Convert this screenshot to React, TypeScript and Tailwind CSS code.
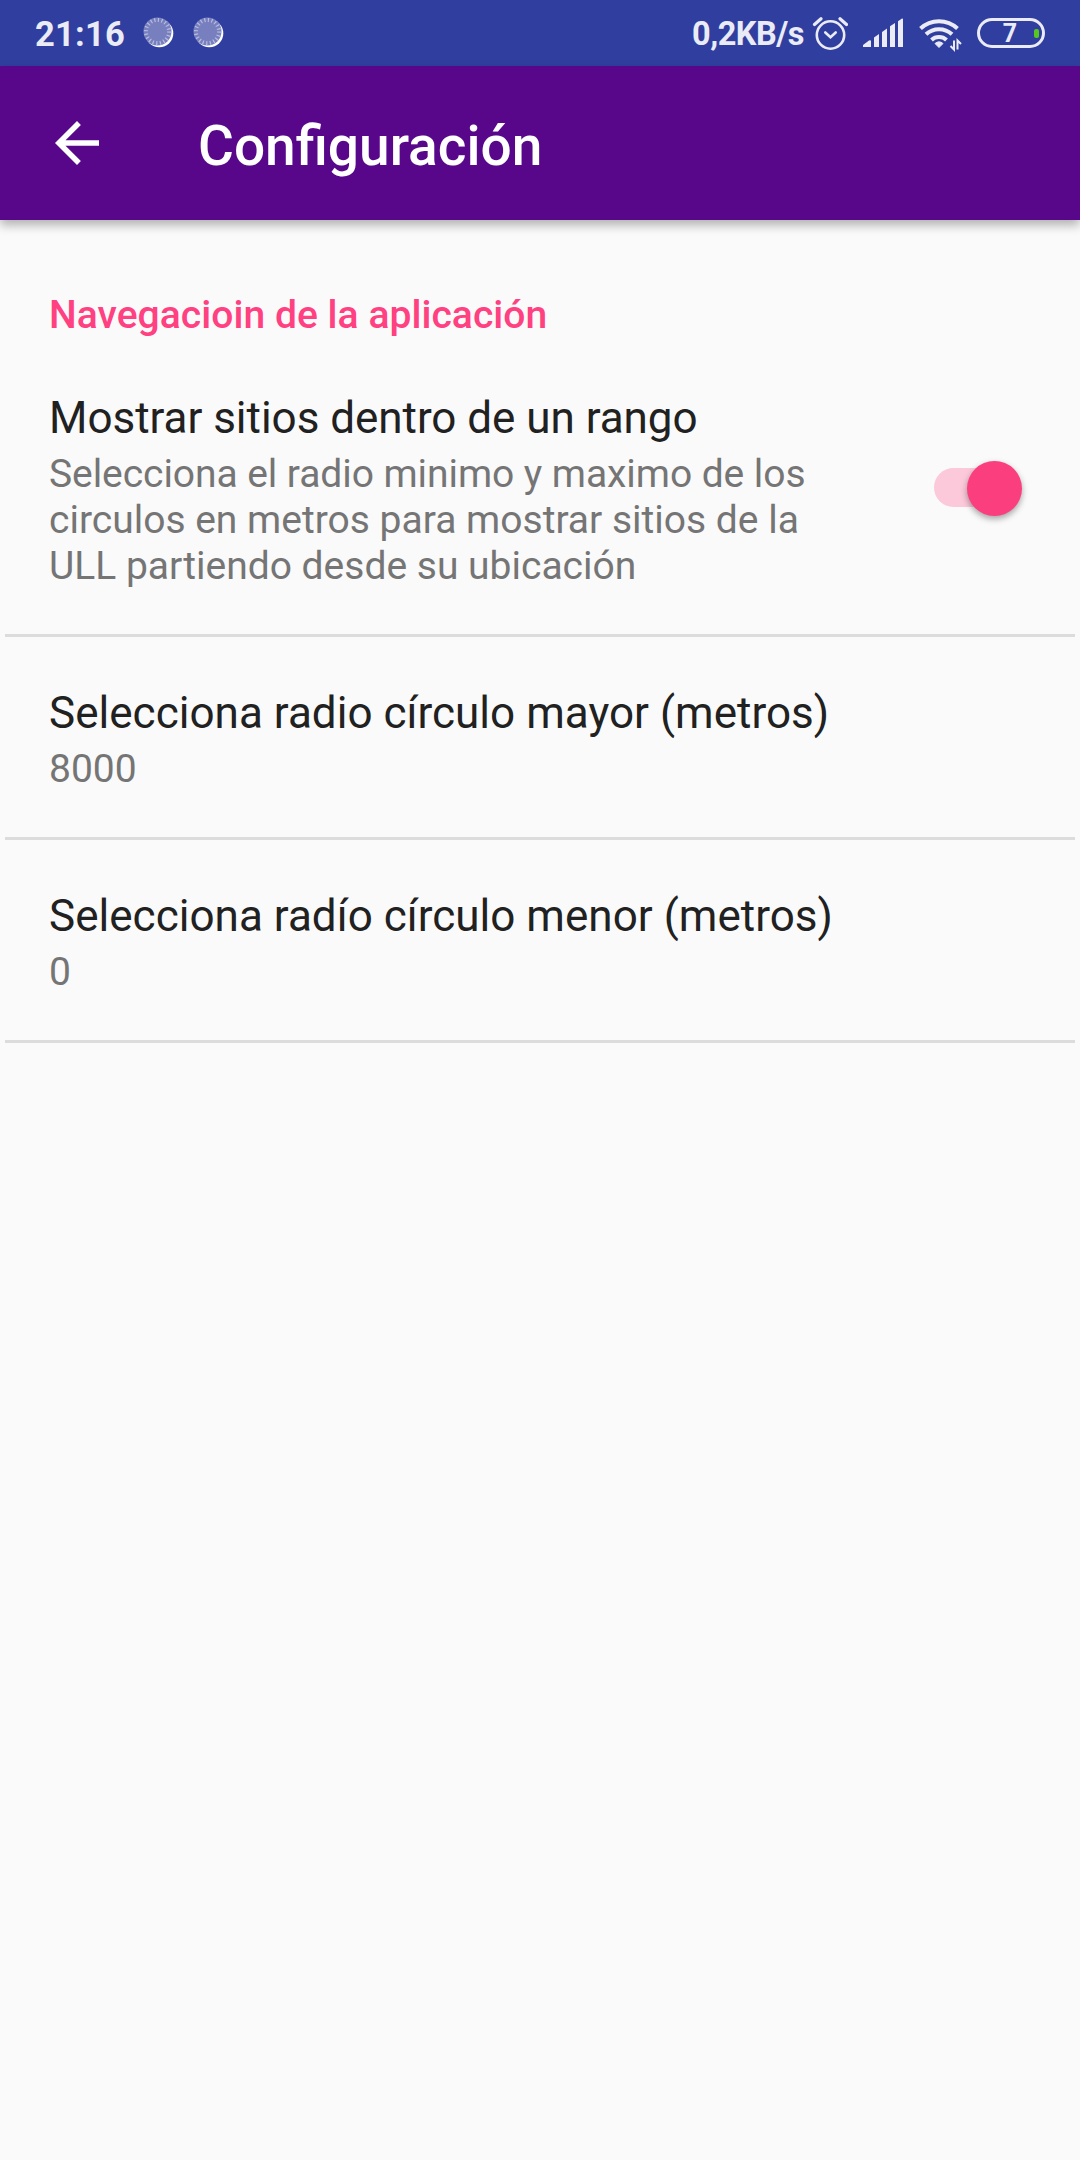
function LoadingDot() {
  return (
    <svg className="h-[32px] w-[32px]" viewBox="0 0 32 32">
      <circle cx="16.3" cy="16.3" r="14" fill="#fff" />
      <circle cx="14.5" cy="14.5" r="14" fill="#777fbf" />
      <circle cx="14.5" cy="14.5" r="11.6" fill="none" stroke="#b9bddd" strokeWidth="4" strokeDasharray="1.2 2.444" />
    </svg>
  );
}

function StatusBar() {
  return (
    <div className="flex h-[66px] items-center bg-[#303f9f] text-[#eaebf5]">
      <span className="mt-[2px] ml-[35px] w-[107.5px] text-[34.5px] leading-[40px] font-bold tracking-[0.2px]">21:16</span>
      <div className="flex gap-[18px]">
        <LoadingDot />
        <LoadingDot />
      </div>
      <span className="mt-[2px] ml-[467.5px] w-[119.5px] text-[32.5px] leading-[40px] font-bold tracking-[-0.5px] whitespace-nowrap">
        0,2KB/s
      </span>
      <svg className="h-[36px] w-[36px]" viewBox="0 0 36 36" fill="none" stroke="#eaebf5" strokeLinecap="round">
        <circle cx="18.5" cy="20" r="13.7" strokeWidth="2.6" />
        <path d="M2.5 9.5 9 3.8M34.5 9.5 28 3.8" strokeWidth="3.2" />
        <path d="m13.3 17.5 5.2 4.8 5.2-4.8" strokeWidth="2.6" />
      </svg>
      <svg className="ml-[14.5px] h-[30px] w-[42px]" viewBox="0 0 42 30" fill="#eaebf5">
        <path d="M1 29v-2l6-4.5q2-1 2 1V29zM12 29V19.5l5-3.5V29zM20 29V14l5-3.5V29zM28 29V8.3L33 5V29zM36 29V3.3L40 .5q1-.3 1 1V29z" />
      </svg>
      <svg className="mt-[2px] ml-[13px] h-[36px] w-[46px]" viewBox="0 0 46 36">
        <g fill="none" stroke="#eaebf5" strokeWidth="4">
          <path d="M3.5 12.5a27 27 0 0 1 37 0" />
          <path d="M9 18.3a19 19 0 0 1 26 0" />
          <path d="M14.5 24a11 11 0 0 1 15 0" />
        </g>
        <path d="m22 31.5-4-4q4-3.3 8 0z" fill="#eaebf5" stroke="#eaebf5" strokeLinejoin="round" />
        <path d="M37 24.5v9l-3.5-3.5M40.5 33.500v-9l3.500 3.500" fill="none" stroke="#eaebf5" strokeWidth="2" />
      </svg>
      <div className="ml-[14px] flex h-[30px] w-[68px] items-center justify-end rounded-full border-[3px] border-[#eaebf5] pr-[3px]">
        <span className="mt-[1px] mr-[17px] text-[25px] leading-[28px] font-bold">7</span>
        <span className="h-[9px] w-[5px] rounded-[2px] bg-[#57c71d]" />
      </div>
    </div>
  );
}

function AppBar() {
  return (
    <header className="flex h-[154px] items-center bg-[#58068a] text-white shadow-[0_5px_10px_rgba(0,0,0,0.3)]">
      <svg className="ml-[44px] h-[66px] w-[66px]" viewBox="0 0 24 24" fill="currentColor">
        <path d="M20 11H7.83l5.59-5.59L12 4l-8 8 8 8 1.41-1.41L7.83 13H20v-2z" />
      </svg>
      <h1 className="mt-[5px] ml-[88px] text-[55px] leading-[64px] font-medium">Configuración</h1>
    </header>
  );
}

function Preference({ title, summary }: { title: string; summary: string }) {
  return (
    <div className="mx-[5px] h-[203px] border-b-[3px] border-[#dcdcdc] px-[44px] pt-[50px]">
      <h3 className="text-[44px] leading-[52px] tracking-[0.03px] text-[#212121]">{title}</h3>
      <p className="mt-[7px] text-[39px] leading-[46px] text-[#757575]">{summary}</p>
    </div>
  );
}

export default function App() {
  return (
    <div className="h-[2160px] w-[1080px] overflow-hidden bg-[#fafafa] font-['Roboto',sans-serif]">
      <StatusBar />
      <AppBar />
      <main className="pt-[72px]">
        <h2 className="ml-[49px] text-[39px] leading-[46px] font-medium tracking-[0.05px] text-[#ff4081]">
          Navegacioin de la aplicación
        </h2>
        <section className="mx-[5px] mt-[26px] flex h-[273px] justify-between border-b-[3px] border-[#dcdcdc] pl-[44px]">
          <div className="pt-[28px]">
            <h3 className="text-[44px] leading-[52px] tracking-[-0.03px] text-[#212121]">Mostrar sitios dentro de un rango</h3>
            <p className="mt-[7px] text-[39px] leading-[46px] text-[#757575]">
              <span className="tracking-[-0.07px]">Selecciona el radio minimo y maximo de los</span>
              <br />
              circulos en metros para mostrar sitios de la
              <br />
              ULL partiendo desde su ubicación
            </p>
          </div>
          <button
            role="switch"
            aria-checked="true"
            aria-label="Mostrar sitios dentro de un rango"
            className="mt-[104px] mr-[58px] flex h-[39px] w-[83px] items-center justify-end self-start rounded-full bg-[#fbc9da]"
          >
            <span className="mt-px -mr-[4.5px] h-[55px] w-[55px] shrink-0 rounded-full bg-[#fb3f7e] shadow-[0_3px_6px_rgba(0,0,0,0.35)]" />
          </button>
        </section>
        <Preference title="Selecciona radio círculo mayor (metros)" summary="8000" />
        <Preference title="Selecciona radío círculo menor (metros)" summary="0" />
      </main>
    </div>
  );
}
